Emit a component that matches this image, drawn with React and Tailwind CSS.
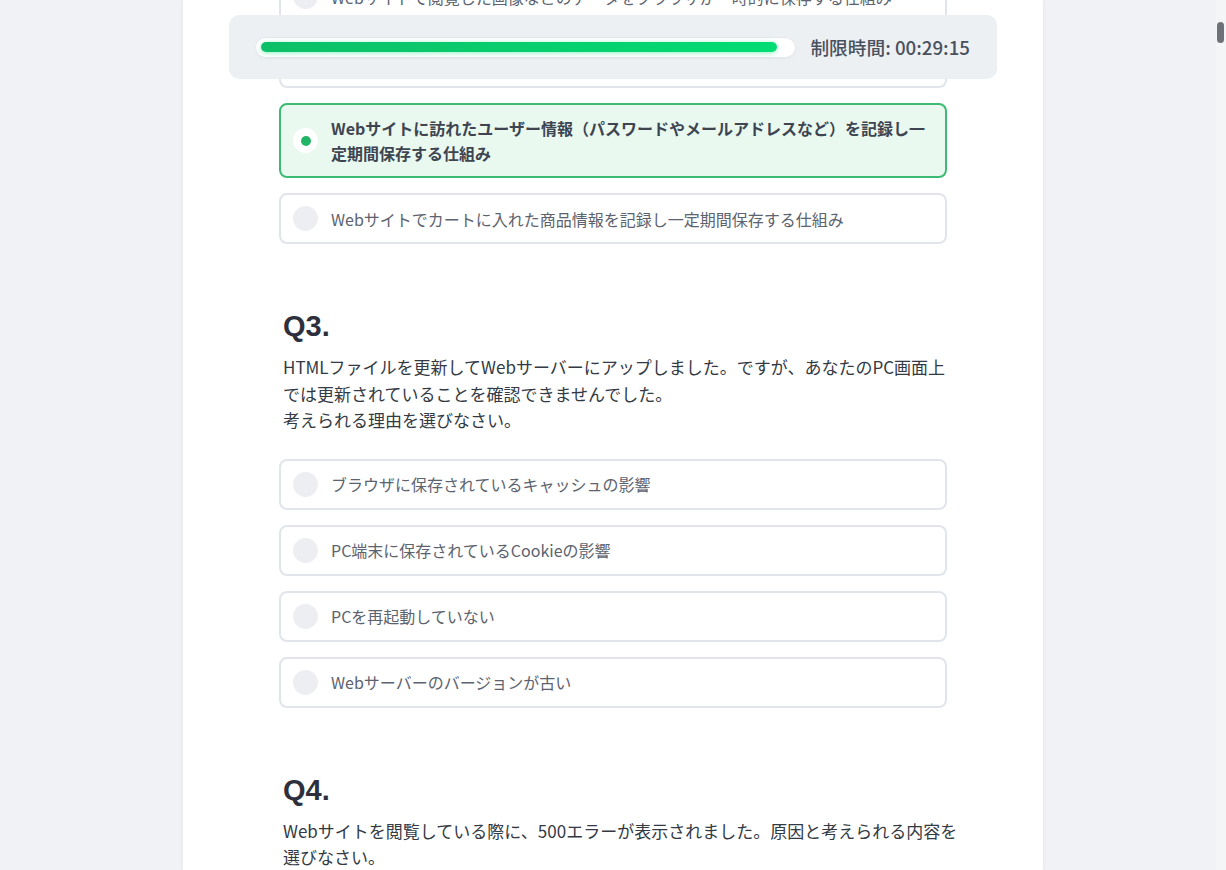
const questions = [
  {
    id: 2,
    options: [
      ['Webサイトで閲覧した画像などのデータをブラウザが一時的に保存する仕組み'],
      ['Webサイトのサーバーがアクセスしたユーザーの閲覧履歴を保存する仕組み'],
      ['Webサイトに訪れたユーザー情報（パスワードやメールアドレスなど）を記録し一', '定期間保存する仕組み'],
      ['Webサイトでカートに入れた商品情報を記録し一定期間保存する仕組み'],
    ],
    selected: 2,
  },
  {
    id: 3,
    title: 'Q3.',
    text: [
      'HTMLファイルを更新してWebサーバーにアップしました。ですが、あなたのPC画面上',
      'では更新されていることを確認できませんでした。',
      '考えられる理由を選びなさい。',
    ],
    options: [
      ['ブラウザに保存されているキャッシュの影響'],
      ['PC端末に保存されているCookieの影響'],
      ['PCを再起動していない'],
      ['Webサーバーのバージョンが古い'],
    ],
  },
  {
    id: 4,
    title: 'Q4.',
    text: [
      'Webサイトを閲覧している際に、500エラーが表示されました。原因と考えられる内容を',
      '選びなさい。',
    ],
    options: [
      ['サーバー内部でエラーが発生している'],
      ['ページが見つからない'],
      ['アクセス権限がない'],
      ['リクエストが多すぎる'],
    ],
  },
];

const Option = ({ lines, selected }) => (
  <div
    className={
      selected
        ? 'flex items-center gap-[13px] rounded-lg border-2 border-[#3dbb75] bg-[#e9f9f0] px-3 py-[11px]'
        : 'flex items-center gap-[13px] rounded-lg border-2 border-[#e1e5eb] bg-white px-3 py-[11px]'
    }
  >
    {selected ? (
      <div className="flex h-[25px] w-[25px] shrink-0 items-center justify-center rounded-full bg-white">
        <div className="h-[10px] w-[10px] rounded-full bg-[#22b567]" />
      </div>
    ) : (
      <div className="h-[25px] w-[25px] shrink-0 rounded-full bg-[#eceef2]" />
    )}
    <div
      className={
        selected
          ? 'text-[16px] leading-[24.5px] font-semibold text-[#3e4551]'
          : 'text-[16px] leading-6 text-[#5c636e]'
      }
    >
      {lines.map((l, i) => (
        <span key={i}>
          {l}
          {i < lines.length - 1 && <br />}
        </span>
      ))}
    </div>
  </div>
);

const Question = ({ q }) => (
  <div className="flex flex-col">
    {q.title && (
      <>
        <h2 className="pl-1 text-[29px] leading-[35px] font-bold text-[#2d303c] [font-family:'Liberation_Sans',Arial,sans-serif]">
          {q.title}
        </h2>
        <p className="mt-[10px] pl-1 text-[17px] leading-[26.5px] text-[#333a44]">
          {q.text.map((t, i) => (
            <span key={i} className="block whitespace-nowrap">
              {t}
            </span>
          ))}
        </p>
      </>
    )}
    <div className={q.title ? 'mt-[25px] flex flex-col gap-[15px]' : 'flex flex-col gap-[15px]'}>
      {q.options.map((o, i) => (
        <Option key={i} lines={o} selected={q.selected === i} />
      ))}
    </div>
  </div>
);

const Timer = ({ total, left }) => {
  const pct = (left / total) * 100;
  const mm = String(Math.floor(left / 60)).padStart(2, '0');
  const ss = String(left % 60).padStart(2, '0');
  return (
    <div className="fixed top-[15px] left-1/2 flex h-[64px] w-[768px] -translate-x-1/2 items-center gap-[14px] rounded-[10px] bg-[#edf0f3] pr-[27px] pl-[26px]">
      <div className="flex h-[21px] flex-1 items-center rounded-full bg-white px-[6px] shadow-[inset_0_0_0_1px_#e3e6ea,0_1px_2px_rgba(0,0,0,0.04)]">
        <div
          className="h-[10px] rounded-full bg-gradient-to-r from-[#0dbf67] to-[#00dc74] shadow-[0_1px_5px_rgba(0,220,120,0.45)]"
          style={{ width: pct + '%' }}
        />
      </div>
      <div className="text-[18.7px] font-medium text-[#4a515e]">
        制限時間: 00:{mm}:{ss}
      </div>
    </div>
  );
};

export default function App() {
  return (
    <div className="relative h-[870px] overflow-hidden bg-[#f0f2f5] [font-family:'Noto_Sans_CJK_JP','Noto_Sans',sans-serif]">
      <div className="mx-auto flex h-full w-[860px] flex-col gap-[65px] bg-white px-[96px] shadow-[0_0_4px_rgba(0,0,0,0.08)]">
        <div className="-mt-[29px]">
          <Question q={questions[0]} />
        </div>
        <Question q={questions[1]} />
        <Question q={questions[2]} />
      </div>

      <Timer total={1800} left={1755} />

      <div className="fixed top-0 right-0 h-full w-[10px] bg-[#f4f5f7]">
        <div className="mt-[22px] ml-[1px] h-[21px] w-[7px] rounded-full bg-[#6e7176]" />
      </div>
    </div>
  );
}
